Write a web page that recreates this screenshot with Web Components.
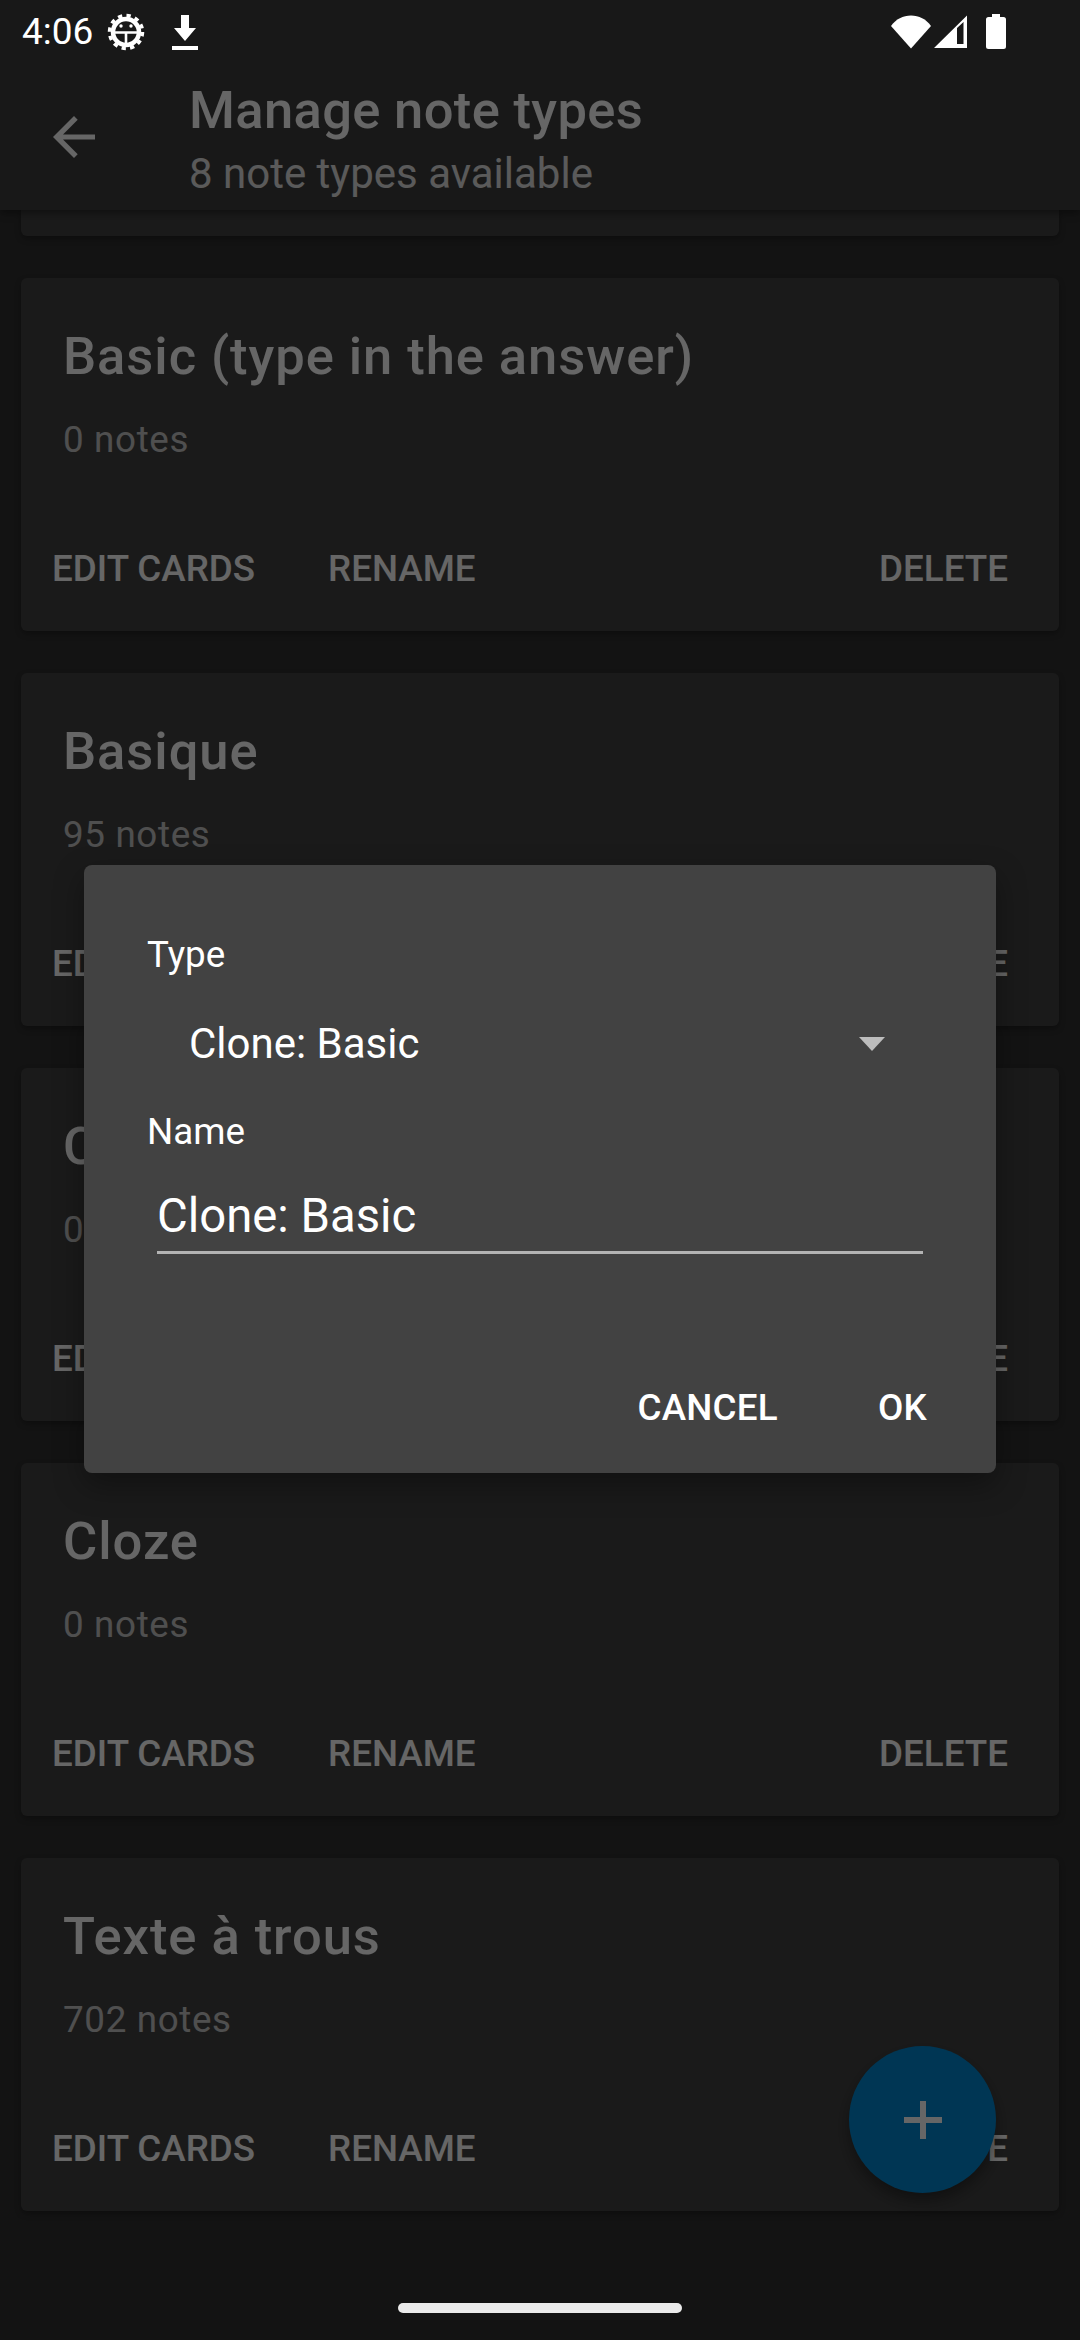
<!DOCTYPE html>
<html>
<head>
<meta charset="utf-8">
<style>
    html, body { margin: 0; padding: 0; background: #303030; }
    body { font-family: Roboto, "Liberation Sans", sans-serif; }
</style>
</head>
<body>
<app-shell>
    <status-bar slot="status"></status-bar>
    <app-toolbar slot="toolbar" subtitle="8 note types available">Manage note types</app-toolbar>

    <note-stub slot="list"></note-stub>
    <note-type-card slot="list" notes="0 notes">Basic (type in the answer)</note-type-card>
    <note-type-card slot="list" notes="95 notes">Basique</note-type-card>
    <note-type-card slot="list" notes="0 notes">Cloze</note-type-card>
    <note-type-card slot="list" notes="0 notes">Cloze</note-type-card>
    <note-type-card slot="list" notes="702 notes">Texte à trous</note-type-card>

    <fab-button slot="fab"></fab-button>
    <gesture-pill slot="pill"></gesture-pill>

    <add-note-type-dialog slot="dialog" type-value="Clone: Basic" name-value="Clone: Basic"></add-note-type-dialog>
</app-shell>

<script>
class AppShell extends HTMLElement {
    constructor() {
        super()
        this.attachShadow({ mode: "open" })
        this.shadowRoot.innerHTML = `
            <style>
                :host { display: block; position: relative; width: 1080px; height: 2340px; overflow: hidden; background: #303030; }
                #page { display: flex; flex-direction: column; height: 100%; }
                #list { display: flex; flex-direction: column; gap: 42px; padding: 0 21px; }
                #scrim { position: absolute; inset: 0; background: rgba(0, 0, 0, .6); }
                #top { position: absolute; top: 0; left: 0; right: 0; }
                #dialog { position: absolute; left: 84px; top: 865px; }
                #fab { position: absolute; left: 849px; top: 2046px; }
                #pill { position: absolute; left: 398px; bottom: 27px; }
            </style>
            <div id="page">
                <slot name="toolbar"></slot>
                <div id="list"><slot name="list"></slot></div>
            </div>
            <div id="fab"><slot name="fab"></slot></div>
            <div id="scrim"></div>
            <div id="top"><slot name="status"></slot></div>
            <div id="pill"><slot name="pill"></slot></div>
            <div id="dialog"><slot name="dialog"></slot></div>
        `
    }
}

class StatusBar extends HTMLElement {
    constructor() {
        super()
        this.attachShadow({ mode: "open" })
        this.shadowRoot.innerHTML = `
            <style>
                :host { display: flex; align-items: center; height: 63px; padding: 0 74px 0 22px; color: #fff; font: 400 37px Roboto, sans-serif; }
                #time { width: 85px; }
                svg { display: block; }
                #left { display: flex; align-items: center; gap: 27px; flex: 1; }
                #right { display: flex; align-items: center; gap: 3px; }
            </style>
            <span id="time">4:06</span>
            <div id="left">
                <svg width="38" height="38" viewBox="0 0 38 38">
                    <circle cx="19" cy="19" r="13" fill="none" stroke="#fff" stroke-width="4.500"/>
                    <circle cx="19" cy="19" r="16.500" fill="none" stroke="#fff" stroke-width="3.500" stroke-dasharray="4.300 4.340"/>
                    <path d="M7 19.500h24M19 19.500v11" stroke="#fff" stroke-width="2.600" fill="none"/>
                    <circle cx="14" cy="13" r="1.700" fill="#fff"/>
                    <circle cx="24" cy="13" r="1.700" fill="#fff"/>
                </svg>
                <svg width="26" height="36" viewBox="0 0 26 36">
                    <path d="M9 1h8v13h7L13 27 2 14h7z" fill="#fff"/>
                    <rect x="0" y="32" width="26" height="4" fill="#fff"/>
                </svg>
            </div>
            <div id="right">
                <svg width="40" height="34" viewBox="0 0 40 34"><path d="M0 11C5 4 12 .5 20 .5S35 4 40 11L20 33.500z" fill="#fff"/></svg>
                <svg width="33" height="34" viewBox="0 0 33 34"><path d="M33 .5V33H0zM23 13v16h6.500V7z" fill="#fff" fill-rule="evenodd"/></svg>
                <svg width="20" height="35" viewBox="0 0 20 35" style="margin-left:16px"><path d="M6 0h8v3h3.500A2.500 2.500 0 0 1 20 5.500v27a2.500 2.500 0 0 1-2.500 2.500h-15A2.500 2.500 0 0 1 0 32.500v-27A2.500 2.500 0 0 1 2.500 3H6z" fill="#fff"/></svg>
            </div>
        `
    }
}

class AppToolbar extends HTMLElement {
    constructor() {
        super()
        this.attachShadow({ mode: "open" })
        this.shadowRoot.innerHTML = `
            <style>
                :host { display: flex; align-items: center; box-sizing: border-box; height: 210px; padding: 63px 0 0 53px; background: #3e3e3e; color: #fff; box-shadow: 0 3px 8px rgba(0,0,0,.4); position: relative; }
                svg { display: block; margin-right: 94px; }
                #title { font: 500 52.500px/60px Roboto, sans-serif; letter-spacing: .35px; margin-top: 7px; }
                #sub { font: 400 42px/52px Roboto, sans-serif; opacity: .85; margin-top: 8px; }
            </style>
            <svg width="42" height="42" viewBox="0 0 42 42"><path d="M42 18.400H10L24.700 3.700 21 0 0 21l21 21 3.700-3.700L10 23.600h32z" fill="#fff"/></svg>
            <div>
                <div id="title"><slot></slot></div>
                <div id="sub">${this.getAttribute("subtitle") || ""}</div>
            </div>
        `
    }
}

// only the tail of the card scrolled under the toolbar
class NoteStub extends HTMLElement {
    constructor() {
        super()
        this.attachShadow({ mode: "open" })
        this.shadowRoot.innerHTML = `
            <style>
                :host { display: block; height: 26px; background: #424242; border-radius: 0 0 6px 6px; box-shadow: 0 3px 6px rgba(0,0,0,.3); }
            </style>
        `
    }
}

class NoteTypeCard extends HTMLElement {
    constructor() {
        super()
        this.attachShadow({ mode: "open" })
        this.shadowRoot.innerHTML = `
            <style>
                :host { display: flex; flex-direction: column; box-sizing: border-box; height: 353px; background: #424242; border-radius: 6px; box-shadow: 0 3px 6px rgba(0,0,0,.3); color: #fff; }
                #title { font: 500 52.500px/64px Roboto, sans-serif; letter-spacing: .95px; margin: 46px 0 0 42px; }
                #notes { font: 400 36.750px/44px Roboto, sans-serif; letter-spacing: .66px; margin: 30px 0 0 42px; opacity: .7; }
                #actions { display: flex; margin: 85px 0 0 31px; padding-right: 51px; font: 500 36.750px/44px Roboto, sans-serif; }
                #actions span:nth-child(2) { margin-left: 73px; }
                #actions span:nth-child(3) { margin-left: auto; }
            </style>
            <div id="title"><slot></slot></div>
            <div id="notes">${this.getAttribute("notes")}</div>
            <div id="actions"><span>EDIT CARDS</span><span>RENAME</span><span>DELETE</span></div>
        `
    }
}

class FabButton extends HTMLElement {
    constructor() {
        super()
        this.attachShadow({ mode: "open" })
        this.shadowRoot.innerHTML = `
            <style>
                :host { display: flex; align-items: center; justify-content: center; width: 147px; height: 147px; border-radius: 50%; background: #0288d1; box-shadow: 0 8px 14px rgba(0,0,0,.35); }
                svg { display: block; }
            </style>
            <svg width="38" height="38" viewBox="0 0 38 38"><path d="M16 0h6v16h16v6H22v16h-6V22H0v-6h16z" fill="#fff"/></svg>
        `
    }
}

class GesturePill extends HTMLElement {
    constructor() {
        super()
        this.attachShadow({ mode: "open" })
        this.shadowRoot.innerHTML = `
            <style>
                :host { display: block; width: 284px; height: 10px; border-radius: 5px; background: #ebebeb; }
            </style>
        `
    }
}

class AddNoteTypeDialog extends HTMLElement {
    constructor() {
        super()
        this.attachShadow({ mode: "open" })
        this.shadowRoot.innerHTML = `
            <style>
                :host { display: flex; flex-direction: column; box-sizing: border-box; width: 912px; height: 608px; padding: 68px 0 0 63px; background: #424242; border-radius: 8px; box-shadow: 0 12px 30px rgba(0,0,0,.35); color: #fff; }
                .label { font: 400 36.750px/44px Roboto, sans-serif; }
                #spinner { display: flex; align-items: center; height: 44px; margin: 45px 0 0 42px; padding-right: 111px; font: 400 42px/44px Roboto, sans-serif; justify-content: space-between; }
                #name { margin-top: 44px; }
                #field { box-sizing: border-box; width: 766px; height: 67px; margin: 33px 0 0 10px; border-bottom: 3px solid #b3b3b3; font: 400 47.250px/58px Roboto, sans-serif; }
                #buttons { display: flex; justify-content: flex-end; gap: 100px; margin-top: 132px; padding-right: 69px; font: 500 36.750px/44px Roboto, sans-serif; letter-spacing: .25px; }
                svg { display: block; }
            </style>
            <div class="label">Type</div>
            <div id="spinner">
                <span>${this.getAttribute("type-value")}</span>
                <svg width="26" height="14" viewBox="0 0 26 14"><path d="M0 0h26L13 14z" fill="#bdbdbd"/></svg>
            </div>
            <div class="label" id="name">Name</div>
            <div id="field">${this.getAttribute("name-value")}</div>
            <div id="buttons"><span>CANCEL</span><span>OK</span></div>
        `
    }
}

customElements.define("app-shell", AppShell)
customElements.define("status-bar", StatusBar)
customElements.define("app-toolbar", AppToolbar)
customElements.define("note-stub", NoteStub)
customElements.define("note-type-card", NoteTypeCard)
customElements.define("fab-button", FabButton)
customElements.define("gesture-pill", GesturePill)
customElements.define("add-note-type-dialog", AddNoteTypeDialog)
</script>
</body>
</html>
